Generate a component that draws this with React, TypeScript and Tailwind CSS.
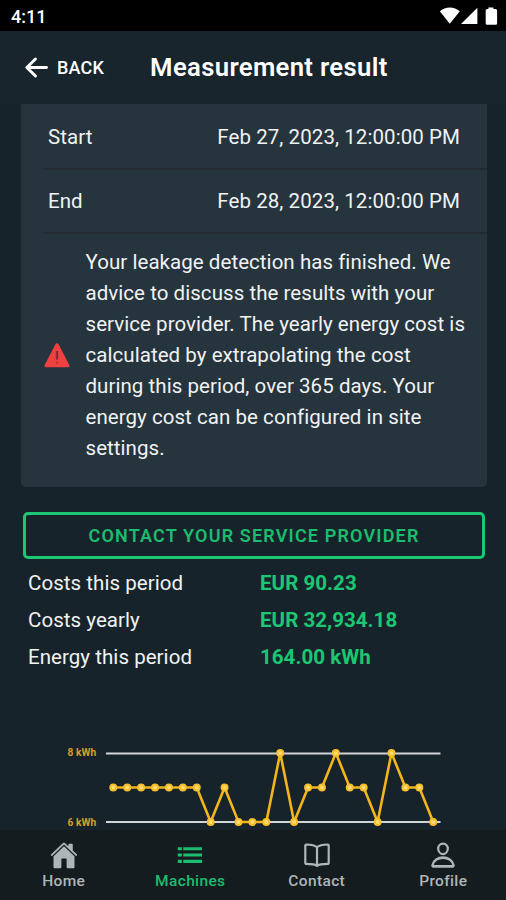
import type { ReactNode } from "react";

const readings = [7, 7, 7, 7, 7, 7, 7, 6, 7, 6, 6, 6, 8, 6, 7, 7, 8, 7, 7, 6, 8, 7, 7, 6];

const chartPoints = readings.map((value, i) => ({
  x: 113.3 + i * 13.91,
  y: 93 - (value - 6) * 34.5,
}));

function StatusBar() {
  return (
    <div className="flex h-[31px] shrink-0 items-center justify-between bg-black pl-[11px] pr-2 text-white">
      <span className="mt-[3px] text-[18px] font-medium leading-none">4:11</span>
      <svg width="60" height="31" viewBox="438 0 60 31" fill="currentColor">
        <path d="M439.8 11.3C445.3 6.2 454.3 6.2 459.8 11.3L449.8 23.8Z" />
        <path d="M477.4 7.8V24H461Z" />
        <path d="M488.4 9V7.4h5V9h2.2q1.5 0 1.5 1.5v12.8q0 1.5-1.5 1.5h-8.4q-1.5 0-1.5-1.5V10.5q0-1.5 1.5-1.5Z" />
      </svg>
    </div>
  );
}

function Header() {
  return (
    <header className="flex h-[73px] shrink-0 items-center bg-[#18252d] pl-6 text-white">
      <button className="flex items-center gap-[9px]">
        <svg width="24" height="24" viewBox="0 0 24 24" fill="none" stroke="currentColor" strokeWidth="2.9" strokeLinecap="round" strokeLinejoin="round">
          <path d="M11.5 3 2.8 11.5l8.7 8.5M3.5 11.5H22.5" />
        </svg>
        <span className="text-[18px] font-medium leading-none tracking-[0.2px]">BACK</span>
      </button>
      <h1 className="ml-[46px] text-[25.7px] font-semibold leading-none tracking-[0.33px]">Measurement result</h1>
    </header>
  );
}

function DateRow({ label, value }: { label: string; value: string }) {
  return (
    <div className="ml-[22px] flex h-16 items-center justify-between border-b-2 border-[#252b31] pl-[5px] pr-[27px]">
      <span>{label}</span>
      <span className="tracking-[0.07px]">{value}</span>
    </div>
  );
}

function ResultRow({ label, value }: { label: string; value: string }) {
  return (
    <div className="flex h-[37px] items-center">
      <span className="w-[232px]">{label}</span>
      <span className="font-bold text-[#1bc773]">{value}</span>
    </div>
  );
}

function Chart() {
  return (
    <svg width="506" height="101" viewBox="0 0 506 101" className="mt-[53px] block">
      <g stroke="#d2d3d8" strokeWidth="1.8">
        <path d="M106 24.5H440.5" />
        <path d="M106 93H440.5" />
      </g>
      <g fill="#d3a02b" fontSize="10.2" fontWeight="700" textAnchor="end">
        <text x="96.3" y="27">8 kWh</text>
        <text x="96.3" y="96.5">6 kWh</text>
      </g>
      <polyline points={chartPoints.map((p) => `${p.x},${p.y}`).join(" ")} fill="none" stroke="#f3b51c" strokeWidth="2.6" />
      {chartPoints.map((p) => (
        <circle key={p.x} cx={p.x} cy={p.y} r="3" fill="#ffdc70" stroke="#f8be2b" strokeWidth="2" />
      ))}
    </svg>
  );
}

function Tab({ label, active, children }: { label: string; active?: boolean; children: ReactNode }) {
  return (
    <button className={`flex flex-1 flex-col items-center pl-px pt-[11px] ${active ? "text-[#1bbd6e]" : "text-[#b0b5b7]"}`}>
      <svg width="28" height="28" viewBox="0 0 512 512" fill="none" stroke="currentColor" strokeLinejoin="round">
        {children}
      </svg>
      <span className="mt-[3px] text-[15.5px] font-medium leading-[18px] tracking-[0.35px]">{label}</span>
    </button>
  );
}

export default function App() {
  return (
    <div className="flex h-[900px] w-[506px] flex-col overflow-hidden bg-[#17232b] font-['Roboto',sans-serif] text-[20.5px] tracking-[0.05px] text-[#f1f2f3]">
      <StatusBar />
      <Header />
      <main className="min-h-0 flex-1 overflow-hidden">
        <section className="ml-[21px] mr-[19px] h-[383px] rounded-b-[5px] bg-[#25343d] pt-[2px]">
          <DateRow label="Start" value="Feb 27, 2023, 12:00:00 PM" />
          <DateRow label="End" value="Feb 28, 2023, 12:00:00 PM" />
          <div className="flex items-center pl-[23px] pt-[13px]">
            <svg width="26" height="25" viewBox="0 0 26 25" className="shrink-0">
              <path d="M11.3 1.6q1.7-2.7 3.4 0l10.5 20.2q1 2.5-1.6 2.5H2.4q-2.6 0-1.6-2.5Z" fill="#ef4240" />
              <path d="M13 8v8.5" stroke="#8d2932" strokeWidth="2.4" />
              <circle cx="13" cy="19.8" r="1.3" fill="#b9343a" />
            </svg>
            <p className="ml-[15.5px] whitespace-nowrap leading-[31px]">
              Your leakage detection has finished. We<br />
              advice to discuss the results with your<br />
              service provider. The yearly energy cost is<br />
              calculated by extrapolating the cost<br />
              during this period, over 365 days. Your<br />
              energy cost can be configured in site<br />
              settings.
            </p>
          </div>
        </section>
        <button className="ml-[23px] mt-[25px] flex h-[47px] w-[462px] items-center justify-center rounded-[5px] border-3 border-[#1bc773] text-[18px] font-semibold tracking-[1.16px] text-[#1bbd6e]">
          CONTACT YOUR SERVICE PROVIDER
        </button>
        <div className="mt-[6px] pl-7">
          <ResultRow label="Costs this period" value="EUR 90.23" />
          <ResultRow label="Costs yearly" value="EUR 32,934.18" />
          <ResultRow label="Energy this period" value="164.00 kWh" />
        </div>
        <Chart />
      </main>
      <nav className="flex h-[70px] shrink-0 bg-[#141c1f]">
        <Tab label="Home">
          <path fill="currentColor" stroke="none" d="M261.56 101.28a8 8 0 0 0-11.06 0L66.4 277.15a8 8 0 0 0-2.47 5.79L63.9 480a16 16 0 0 0 16 16H192a16 16 0 0 0 16-16V328a8 8 0 0 1 8-8h80a8 8 0 0 1 8 8v152a16 16 0 0 0 16 16h112.06a16 16 0 0 0 16-16V282.94a8 8 0 0 0-2.47-5.79Z" />
          <path fill="currentColor" stroke="none" d="m490.91 244.15-74.8-71.56V64a16 16 0 0 0-16-16h-48a16 16 0 0 0-16 16v32l-57.92-55.38C272.77 35.14 264.71 32 256 32s-16.74 3.14-22.14 8.63L21.16 244.13c-6.22 6-7 15.87-1.34 22.37A16 16 0 0 0 43 267.56L250.5 69.28a8 8 0 0 1 11.06 0l207.52 198.28a16 16 0 0 0 22.59-.44c6.14-6.36 5.63-16.86-.76-22.97Z" />
        </Tab>
        <Tab label="Machines" active>
          <path strokeWidth="56" d="M132 140H476M132 256H476M132 372H476M32 140h76M32 256h76M32 372h76" />
        </Tab>
        <Tab label="Contact">
          <path strokeWidth="40" strokeLinecap="round" d="M256 116c38-38 108-52 196-52a18 18 0 0 1 18 18v320a16 16 0 0 1-18 16c-100 0-166 8-196 38-30-30-96-38-196-38a16 16 0 0 1-18-16V82a18 18 0 0 1 18-18c88 0 158 14 196 52ZM256 116v334" />
        </Tab>
        <Tab label="Profile">
          <path strokeWidth="40" d="M344 144c-3.92 52.87-44 96-88 96s-84.15-43.12-88-96c-4-55 35-96 88-96s92 42 88 96Z" />
          <path strokeWidth="46" d="M256 304c-87 0-175.3 48-191.64 138.6C62.39 453.52 68.57 464 80 464h352c11.44 0 17.62-10.48 15.65-21.4C431.3 352 343 304 256 304Z" />
        </Tab>
      </nav>
    </div>
  );
}
